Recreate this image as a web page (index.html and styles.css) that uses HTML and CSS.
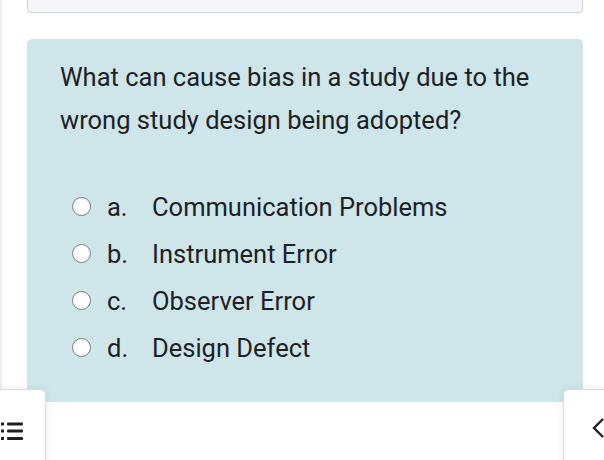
FILE: index.html
```html
<!DOCTYPE html>
<html>
<head>
<meta charset="utf-8">
<link rel="stylesheet" href="styles.css">
</head>
<body>
<div class="page">
  <div class="info"></div>
  <div class="card">
    <div class="question">What can cause bias in a study due to the wrong study design being adopted?</div>
    <div class="answers">
      <div class="opt"><span class="radio"></span><span class="letter">a.</span><span class="text">Communication Problems</span></div>
      <div class="opt"><span class="radio"></span><span class="letter">b.</span><span class="text">Instrument Error</span></div>
      <div class="opt"><span class="radio"></span><span class="letter">c.</span><span class="text">Observer Error</span></div>
      <div class="opt"><span class="radio"></span><span class="letter">d.</span><span class="text">Design Defect</span></div>
    </div>
  </div>
</div>
<div class="btn btn-left">
  <svg class="list-icon" width="24" height="20" viewBox="0 0 24 20">
    <rect x="0" y="0.5" width="3" height="3" fill="#1d2125"/>
    <rect x="6" y="0.5" width="16" height="3" rx="1" fill="#1d2125"/>
    <rect x="0" y="7.5" width="3" height="3" fill="#1d2125"/>
    <rect x="6" y="7.5" width="16" height="3" rx="1" fill="#1d2125"/>
    <rect x="0" y="15" width="3" height="3" fill="#1d2125"/>
    <rect x="6" y="15" width="16" height="3" rx="1" fill="#1d2125"/>
  </svg>
</div>
<div class="btn btn-right">
  <svg class="chev" width="14" height="22" viewBox="0 0 14 22">
    <path d="M12 2 L3 11 L12 20" fill="none" stroke="#1d2125" stroke-width="2.4"/>
  </svg>
</div>
</body>
</html>
```

FILE: styles.css
```css
html, body {
  margin: 0;
  padding: 0;
  background: #fff;
  font-family: Roboto, "Noto Sans", sans-serif;
  color: #1d2125;
  overflow: hidden;
  height: 460px;
}
body {
  border-left: 2px solid #eef0f2;
  box-sizing: border-box;
}
.page {
  padding-left: 25px;
  width: 556px;
}
.info {
  margin-top: -30px;
  height: 41px;
  background: #f6f6f8;
  border: 1px solid #cdd3da;
  border-radius: 4px;
}
.card {
  margin-top: 26px;
  background: #cee6ea;
  border-radius: 5px;
  padding: 17px 20px 0 33px;
  height: 363px;
  box-sizing: border-box;
}
.question {
  font-size: 25.5px;
  line-height: 43px;
}
.answers {
  margin-top: 41px;
}
.opt {
  display: flex;
  align-items: center;
  height: 47px;
  font-size: 25.5px;
}
.radio {
  width: 17px;
  height: 17px;
  border: 1.5px solid #7d7d7d;
  border-radius: 50%;
  background: #fff;
  margin-left: 12px;
  margin-right: 16px;
  flex: none;
}
.letter {
  width: 45px;
}
.btn {
  position: fixed;
  top: 389px;
  height: 90px;
  background: #fff;
  border: 1.5px solid #dcdcdc;
  border-radius: 6px;
  box-shadow: 0 0 8px rgba(0,0,0,0.08);
  box-sizing: border-box;
}
.btn-left {
  left: -20px;
  width: 66px;
}
.btn-right {
  left: 563px;
  width: 70px;
}
.list-icon {
  position: absolute;
  left: 20px;
  top: 32px;
}
.chev {
  position: absolute;
  left: 27px;
  top: 27px;
}
```
